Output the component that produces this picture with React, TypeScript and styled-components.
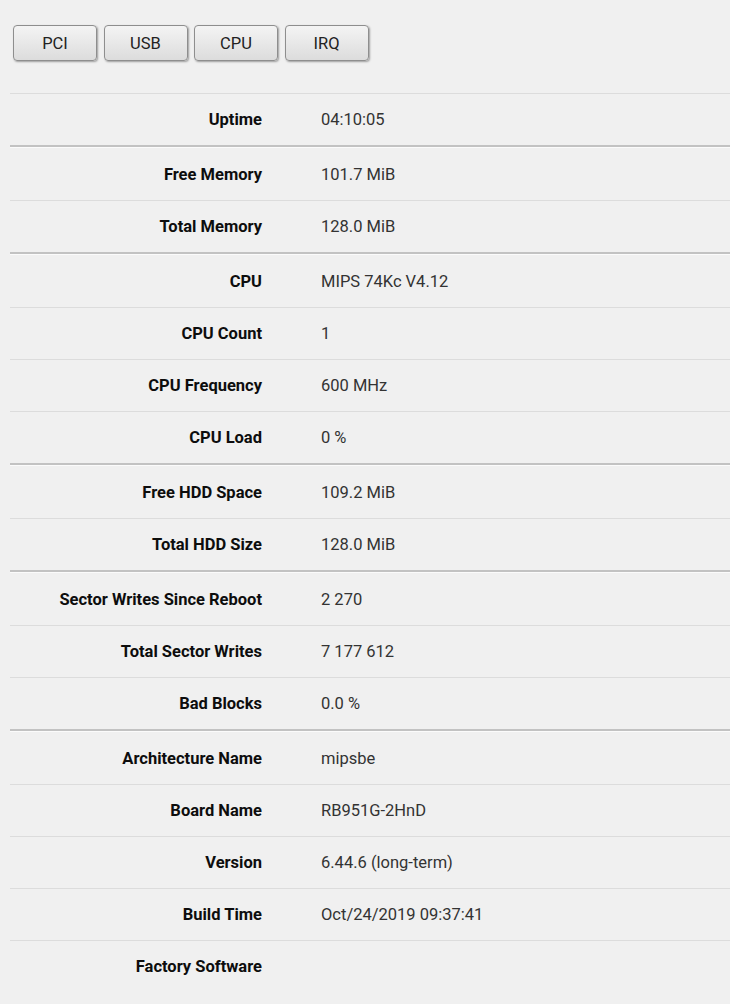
import React from "react";
import styled, { createGlobalStyle } from "styled-components";

const Global = createGlobalStyle`
  html, body { margin: 0; padding: 0; background: #f0f0f0; }
  body { font-family: Roboto, "Liberation Sans", Arial, sans-serif; }
`;

const Page = styled.div`
  width: 730px;
  min-height: 1004px;
  overflow: hidden;
  background: #f0f0f0;
`;

const Toolbar = styled.div`
  display: flex;
  align-items: flex-start;
  gap: 6.5px;
  padding: 25px 0 0 13px;
  height: 93px;
  box-sizing: border-box;
`;

const Button = styled.button`
  width: 84px;
  height: 36px;
  box-sizing: border-box;
  border: 1px solid #8e8e8e;
  border-radius: 4px;
  background: linear-gradient(#f4f4f4, #dcdcdc);
  box-shadow: 1px 1px 2px rgba(0, 0, 0, 0.35);
  font-family: Roboto, "Liberation Sans", Arial, sans-serif;
  font-size: 16.5px;
  color: #222;
  padding: 0;
  cursor: pointer;
`;

const Table = styled.div`
  margin-left: 10px;
`;

const Row = styled.div<{ $group?: boolean }>`
  display: grid;
  grid-template-columns: 252px 1fr;
  column-gap: 59px;
  align-items: center;
  box-sizing: border-box;
  height: ${(p) => (p.$group ? 55 : 52)}px;
  padding-top: ${(p) => (p.$group ? 1 : 0)}px;
  border-top: ${(p) => (p.$group ? "2px solid #c2c2c2" : "1px solid #dcdcdc")};
  box-shadow: ${(p) => (p.$group ? "inset 0 1px 0 #fbfbfb" : "none")};
  font-size: 16.5px;
`;

const Label = styled.div`
  text-align: right;
  font-weight: 700;
  color: #0d0d0d;
`;

const Value = styled.div`
  color: #333;
`;

type Item = { label: string; value: string; group?: boolean };

const items: Item[] = [
  { label: "Uptime", value: "04:10:05" },
  { label: "Free Memory", value: "101.7 MiB", group: true },
  { label: "Total Memory", value: "128.0 MiB" },
  { label: "CPU", value: "MIPS 74Kc V4.12", group: true },
  { label: "CPU Count", value: "1" },
  { label: "CPU Frequency", value: "600 MHz" },
  { label: "CPU Load", value: "0 %" },
  { label: "Free HDD Space", value: "109.2 MiB", group: true },
  { label: "Total HDD Size", value: "128.0 MiB" },
  { label: "Sector Writes Since Reboot", value: "2 270", group: true },
  { label: "Total Sector Writes", value: "7 177 612" },
  { label: "Bad Blocks", value: "0.0 %" },
  { label: "Architecture Name", value: "mipsbe", group: true },
  { label: "Board Name", value: "RB951G-2HnD" },
  { label: "Version", value: "6.44.6 (long-term)" },
  { label: "Build Time", value: "Oct/24/2019 09:37:41" },
  { label: "Factory Software", value: "" },
];

export default function App() {
  return (
    <Page>
      <Global />
      <Toolbar>
        {["PCI", "USB", "CPU", "IRQ"].map((b) => (
          <Button key={b}>{b}</Button>
        ))}
      </Toolbar>
      <Table>
        {items.map((it) => (
          <Row key={it.label} $group={it.group}>
            <Label>{it.label}</Label>
            <Value>{it.value}</Value>
          </Row>
        ))}
      </Table>
    </Page>
  );
}
